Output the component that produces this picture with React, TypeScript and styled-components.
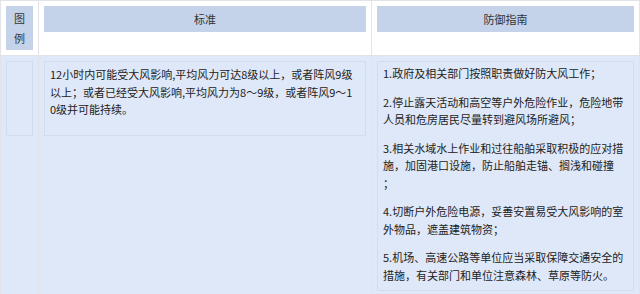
import React from "react";
import styled, { createGlobalStyle } from "styled-components";

const Global = createGlobalStyle`
  html, body { margin: 0; padding: 0; background: #ffffff; }
  body { font-family: "Noto Sans CJK SC", "Noto Sans", sans-serif; }
`;

const Table = styled.table`
  width: 640px;
  border-collapse: collapse;
  table-layout: fixed;
  font-size: 11px;
  color: #222222;
`;

const Cell = styled.td<{ $body?: boolean }>`
  border: 1px solid #e1e3e6;
  padding: 5px;
  vertical-align: top;
  background: ${(p) => (p.$body ? "#dfe8f8" : "#ffffff")};
`;

const HeadBox = styled.div<{ $tall?: boolean }>`
  background: #c5d3ea;
  color: #333333;
  text-align: center;
  line-height: ${(p) => (p.$tall ? "20px" : "26px")};
  padding: ${(p) => (p.$tall ? "2px 0" : "0")};
`;

const BodyBox = styled.div<{ $fixed?: boolean }>`
  border: 1px solid #d3dceb;
  padding: ${(p) => (p.$fixed ? "4px 5px" : "3px 5px 6px")};
  line-height: 17.5px;
  height: ${(p) => (p.$fixed ? "75px" : "auto")};
  box-sizing: border-box;
  white-space: nowrap;
`;

const Para = styled.p`
  margin: 0;
  & + & { margin-top: 11px; }
`;

const standard = [
  "12小时内可能受大风影响,平均风力可达8级以上，或者阵风9级",
  "以上；或者已经受大风影响,平均风力为8～9级，或者阵风9～1",
  "0级并可能持续。",
];

const guide = [
  ["1.政府及相关部门按照职责做好防大风工作；"],
  ["2.停止露天活动和高空等户外危险作业，危险地带", "人员和危房居民尽量转到避风场所避风；"],
  ["3.相关水域水上作业和过往船舶采取积极的应对措", "施，加固港口设施，防止船舶走锚、搁浅和碰撞", "；"],
  ["4.切断户外危险电源，妥善安置易受大风影响的室", "外物品，遮盖建筑物资；"],
  ["5.机场、高速公路等单位应当采取保障交通安全的", "措施，有关部门和单位注意森林、草原等防火。"],
];

const Lines = ({ lines }: { lines: string[] }) => (
  <>
    {lines.map((l, i) => (
      <React.Fragment key={i}>
        {i > 0 && <br />}
        {l}
      </React.Fragment>
    ))}
  </>
);

export default function App() {
  return (
    <>
      <Global />
      <Table>
        <colgroup>
          <col style={{ width: 38 }} />
          <col style={{ width: 333 }} />
          <col />
        </colgroup>
        <thead>
          <tr>
            <Cell>
              <HeadBox $tall>
                图<br />例
              </HeadBox>
            </Cell>
            <Cell>
              <HeadBox>标准</HeadBox>
            </Cell>
            <Cell>
              <HeadBox>防御指南</HeadBox>
            </Cell>
          </tr>
        </thead>
        <tbody>
          <tr>
            <Cell $body>
              <BodyBox $fixed />
            </Cell>
            <Cell $body>
              <BodyBox $fixed>
                <Lines lines={standard} />
              </BodyBox>
            </Cell>
            <Cell $body>
              <BodyBox>
                {guide.map((p, i) => (
                  <Para key={i}>
                    <Lines lines={p} />
                  </Para>
                ))}
              </BodyBox>
            </Cell>
          </tr>
        </tbody>
      </Table>
    </>
  );
}
